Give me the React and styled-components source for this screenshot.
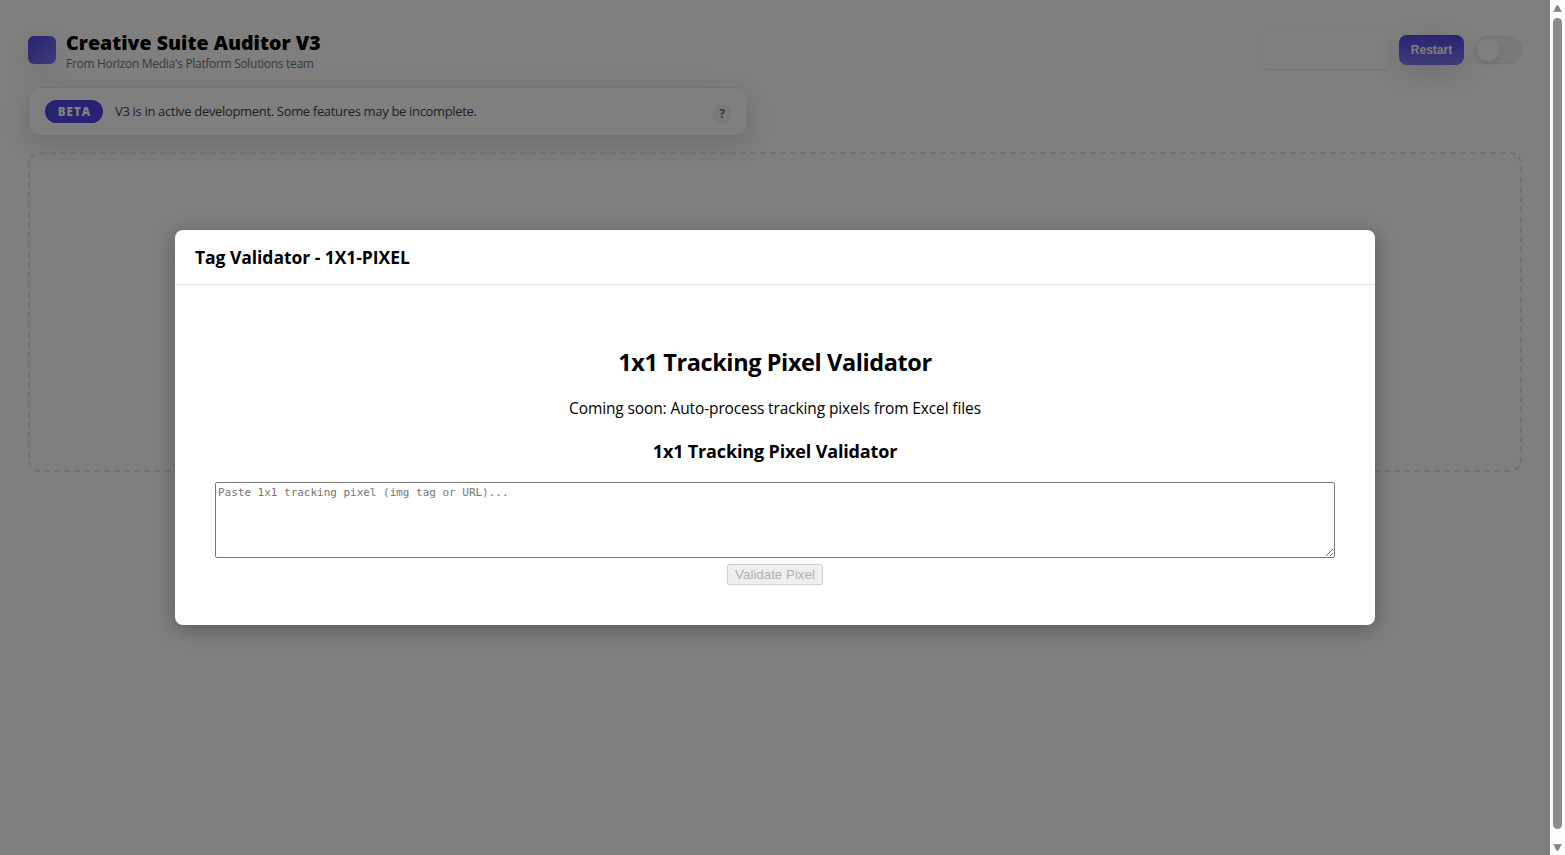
import React from "react";
import styled, { createGlobalStyle } from "styled-components";

const Global = createGlobalStyle`
  *, *::before, *::after { box-sizing: border-box; }
  html, body { margin: 0; height: 100%; overflow: hidden; background: #fff; }
  body { font-family: "Segoe UI", "Open Sans", "Noto Sans", sans-serif; color: #000; }
  h1, h2, h3, p { margin: 0; white-space: nowrap; }
`;

const Frame = styled.div`
  display: flex;
  height: 100vh;
`;

const Page = styled.div`
  position: relative;
  flex: 1;
  min-width: 0;
  overflow: hidden;
  background: #fff;
`;

const Content = styled.main`
  display: flex;
  flex-direction: column;
  padding: 30px 28px;
`;

const Header = styled.header`
  display: flex;
  align-items: center;
  justify-content: space-between;
  height: 40px;
`;

const Brand = styled.div`
  display: flex;
  align-items: center;
  gap: 10px;
`;

const Logo = styled.div`
  width: 28px;
  height: 28px;
  border-radius: 6px;
  background: linear-gradient(135deg, #4f46e5, #7c78f0);
  box-shadow: 0 8px 30px rgba(0, 0, 0, 0.12);
`;

const BrandText = styled.div`
  display: flex;
  flex-direction: column;
  padding-top: 2px;
`;

const Title = styled.h1`
  font-size: 19.5px;
  line-height: 24px;
  font-weight: 800;
  letter-spacing: 0.04px;
`;

const Subtitle = styled.p`
  font-size: 12px;
  line-height: 17px;
  letter-spacing: -0.31px;
  color: #6b7280;
`;

const Actions = styled.div`
  display: flex;
  align-items: center;
  gap: 10px;
`;

const BlankButton = styled.div`
  width: 127px;
  height: 38px;
  border-radius: 6px;
  background: #fff;
  box-shadow: 0 1px 3px rgba(0, 0, 0, 0.1);
`;

const RestartButton = styled.button`
  width: 65px;
  height: 30px;
  padding: 0;
  border: 0;
  border-radius: 8px;
  color: #fff;
  background: linear-gradient(180deg, #4f46e5, #7c78f0);
  box-shadow: 0 8px 30px rgba(0, 0, 0, 0.15);
  font: 700 12px/30px "Liberation Sans", Arial, sans-serif;
`;

const Toggle = styled.div`
  display: flex;
  align-items: center;
  width: 48px;
  height: 28px;
  padding: 0 2px;
  border: 1px solid #e5e7eb;
  border-radius: 14px;
  background: linear-gradient(90deg, #f4f4f5, #f1f4f8);
`;

const Knob = styled.div`
  width: 22px;
  height: 22px;
  border-radius: 50%;
  background: #fff;
  box-shadow: 0 4px 12px rgba(0, 0, 0, 0.08);
`;

const Banner = styled.section`
  display: flex;
  align-items: center;
  width: 720px;
  height: 49px;
  margin-top: 17px;
  padding: 0 16px;
  border: 1px solid #e7e7e9;
  border-radius: 12px;
  background: #fff;
  box-shadow: 0 8px 30px rgba(0, 0, 0, 0.15);
`;

const Badge = styled.span`
  width: 58px;
  height: 23px;
  padding-left: 1px;
  border-radius: 12px;
  text-align: center;
  background: #4f46e5;
  color: #fff;
  font-size: 11.5px;
  font-weight: 800;
  line-height: 24px;
  letter-spacing: 1.1px;
`;

const BannerText = styled.p`
  flex: 1;
  margin: -2px 0 0 12px;
  font-size: 13px;
  line-height: 20px;
  letter-spacing: -0.33px;
  color: #374151;
`;

const Help = styled.span`
  width: 18px;
  height: 18px;
  margin-top: 5px;
  border: 1px solid #e5e7eb;
  border-radius: 50%;
  background: #f1f5f9;
  color: #6b7280;
  font-size: 12px;
  font-weight: 700;
  line-height: 16px;
  text-align: center;
`;

const DropZone = styled.section`
  height: 320px;
  margin-top: 16px;
  border: 2px dashed #e2e2e5;
  border-radius: 12px;
`;

const Overlay = styled.div`
  position: absolute;
  inset: 0;
  display: flex;
  align-items: center;
  justify-content: center;
  background: rgba(0, 0, 0, 0.5);
`;

const Modal = styled.div`
  width: 1200px;
  height: 395px;
  border-radius: 8px;
  background: #fff;
  box-shadow: 0 4px 20px rgba(0, 0, 0, 0.3);
`;

const ModalHeader = styled.div`
  display: flex;
  align-items: center;
  height: 55px;
  padding: 0 20px;
  border-bottom: 1px solid #e5e5e5;
`;

const ModalTitle = styled.h3`
  font-size: 17.5px;
  line-height: 24px;
  font-weight: 700;
  letter-spacing: -0.05px;
`;

const ModalBody = styled.div`
  display: flex;
  flex-direction: column;
  align-items: center;
  padding: 61px 40px 40px;
`;

const Heading = styled.h2`
  font-size: 23.5px;
  line-height: 32px;
  font-weight: 700;
  letter-spacing: -0.4px;
`;

const Lead = styled.p`
  margin-top: 19px;
  font-size: 15.5px;
  line-height: 22px;
  letter-spacing: -0.12px;
`;

const Subheading = styled.h3`
  margin-top: 20px;
  font-size: 18px;
  line-height: 25px;
  font-weight: 700;
  letter-spacing: -0.15px;
`;

const PixelInput = styled.textarea`
  width: 1120px;
  height: 76px;
  margin: 18px 0 6px;
  padding: 3px 2px 2px;
  border: 1px solid #767676;
  border-radius: 2px;
  outline: 0;
  background: #fff;
  font: 11px/14px "DejaVu Sans Mono", monospace;
  letter-spacing: -0.02px;
  &::placeholder { color: #757575; opacity: 1; }
`;

const ValidateButton = styled.button`
  width: 96px;
  height: 21px;
  padding: 0;
  border: 1px solid #d0d0d0;
  border-radius: 2px;
  color: #b0b0b0;
  background: #efefef;
  font: 13.333px/19px "Liberation Sans", Arial, sans-serif;
`;

const Scrollbar = styled.div`
  display: flex;
  flex-direction: column;
  align-items: center;
  width: 15px;
  padding: 5px 0 4px;
  background: #fcfcfc;
`;

const Thumb = styled.div`
  flex: 1;
  width: 9px;
  margin: 6px 0 15px;
  border-radius: 5px;
  background: #8b8b8b;
`;

const ArrowIcon = styled.svg`
  display: block;
  width: 9px;
  height: 7px;
`;

const Arrow = ({ down }) => (
  <ArrowIcon viewBox="0 0 9 7">
    <path
      d={down ? "M0.8 0.5H8.2L5.2 6.2Q4.5 7 3.8 6.2Z" : "M0.8 6.5H8.2L5.2 0.8Q4.5 0 3.8 0.8Z"}
      fill="#858585"
      stroke="#858585"
      strokeLinejoin="round"
      strokeWidth="0.8"
    />
  </ArrowIcon>
);

export default function App() {
  return (
    <Frame>
      <Global />
      <Page>
        <Content>
          <Header>
            <Brand>
              <Logo />
              <BrandText>
                <Title>Creative Suite Auditor V3</Title>
                <Subtitle>From Horizon Media's Platform Solutions team</Subtitle>
              </BrandText>
            </Brand>
            <Actions>
              <BlankButton />
              <RestartButton>Restart</RestartButton>
              <Toggle>
                <Knob />
              </Toggle>
            </Actions>
          </Header>
          <Banner>
            <Badge>BETA</Badge>
            <BannerText>V3 is in active development. Some features may be incomplete.</BannerText>
            <Help>?</Help>
          </Banner>
          <DropZone />
        </Content>
        <Overlay>
          <Modal>
            <ModalHeader>
              <ModalTitle>Tag Validator - 1X1-PIXEL</ModalTitle>
            </ModalHeader>
            <ModalBody>
              <Heading>1x1 Tracking Pixel Validator</Heading>
              <Lead>Coming soon: Auto-process tracking pixels from Excel files</Lead>
              <Subheading>1x1 Tracking Pixel Validator</Subheading>
              <PixelInput placeholder="Paste 1x1 tracking pixel (img tag or URL)..." />
              <ValidateButton disabled>Validate Pixel</ValidateButton>
            </ModalBody>
          </Modal>
        </Overlay>
      </Page>
      <Scrollbar>
        <Arrow />
        <Thumb />
        <Arrow down />
      </Scrollbar>
    </Frame>
  );
}
